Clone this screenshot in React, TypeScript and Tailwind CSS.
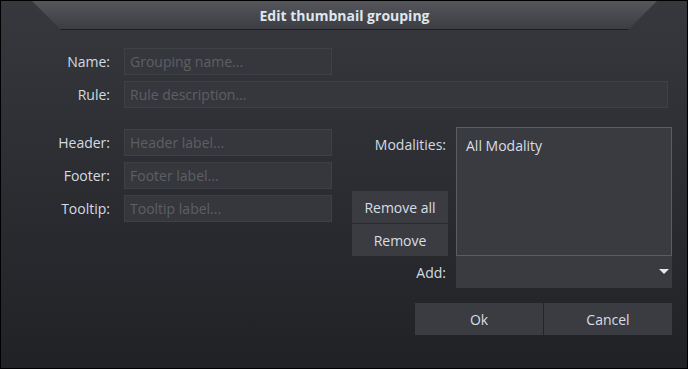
const font = { fontFamily: '"Open Sans", "Noto Sans", sans-serif' };

type FieldProps = {
    label: string;
    placeholder: string;
    width: string;
}

const Field = ({label, placeholder, width}: FieldProps) => {
    return (
        <div className="flex items-center gap-[14px]">
            <label className="w-[109px] text-right text-[14px] text-[#d3dbe4]">{label}</label>
            <input
                className={`${width} h-[27px] border border-[#3e4045] bg-[#36373c] px-[5px] text-[14px] text-[#d3dbe4] placeholder:text-[#5d5f65] outline-none`}
                placeholder={placeholder}
            />
        </div>
    )
}

const Button = ({children, className}: {children: string; className: string}) => {
    return (
        <button className={`${className} h-[32px] bg-[#3b3c41] text-[14px] text-[#d8dee6]`}>
            {children}
        </button>
    )
}

export default function App() {
    return (
        <div
            className="flex h-[369px] w-[688px] flex-col border border-black bg-gradient-to-b from-[#36383d] to-[#212226]"
            style={font}
        >
            {/* title tab */}
            <div className="ml-[31px] mr-[30px] flex h-[29px] items-center justify-center border-b border-[#1d1e22] bg-gradient-to-b from-[#55575d] to-[#3b3d43] [clip-path:polygon(0_0,100%_0,calc(100%-29px)_100%,29px_100%)]">
                <span className="text-[14px] font-bold text-[#dfe6ee]">Edit thumbnail grouping</span>
            </div>

            <div className="mt-[18px] flex flex-col gap-[6px]">
                <Field label="Name:" placeholder="Grouping name..." width="w-[208px]"/>
                <Field label="Rule:" placeholder="Rule description..." width="w-[544px]"/>
            </div>

            <div className="flex">
                <div className="mt-[21px] flex flex-col gap-[6px]">
                    <Field label="Header:" placeholder="Header label..." width="w-[208px]"/>
                    <Field label="Footer:" placeholder="Footer label..." width="w-[208px]"/>
                    <Field label="Tooltip:" placeholder="Tooltip label..." width="w-[208px]"/>
                </div>

                <div className="ml-[20px] mt-[19px] flex flex-col">
                    <div className="grid grid-cols-[96px_216px] gap-x-[8px]">
                        <div className="flex h-[129px] flex-col justify-between">
                            <span className="pr-[2px] pt-[7px] text-right text-[14px] text-[#d3dbe4]">Modalities:</span>
                            <div className="flex flex-col gap-[1px]">
                                <Button className="w-[96px]">Remove all</Button>
                                <Button className="w-[96px]">Remove</Button>
                            </div>
                        </div>
                        <div className="h-[129px] border border-[#5b5d62] bg-[#3a3b40] pl-[9px] pt-[7px] text-[14px] text-[#d8dee6]">
                            All Modality
                        </div>
                        <div className="flex h-[32px] items-center justify-end pr-[2px] text-[14px] text-[#d3dbe4]">Add:</div>
                        <div className="flex h-[32px] items-center justify-end bg-[#3a3b40] pr-[3px]">
                            <svg width="10" height="6" viewBox="0 0 10 6">
                                <path d="M0 0 H10 L5 5 Z" fill="#e4e7ec"/>
                            </svg>
                        </div>
                    </div>

                    <div className="ml-[63px] mt-[15px] flex gap-[1px]">
                        <Button className="w-[128px]">Ok</Button>
                        <Button className="w-[128px]">Cancel</Button>
                    </div>
                </div>
            </div>
        </div>
    )
}
